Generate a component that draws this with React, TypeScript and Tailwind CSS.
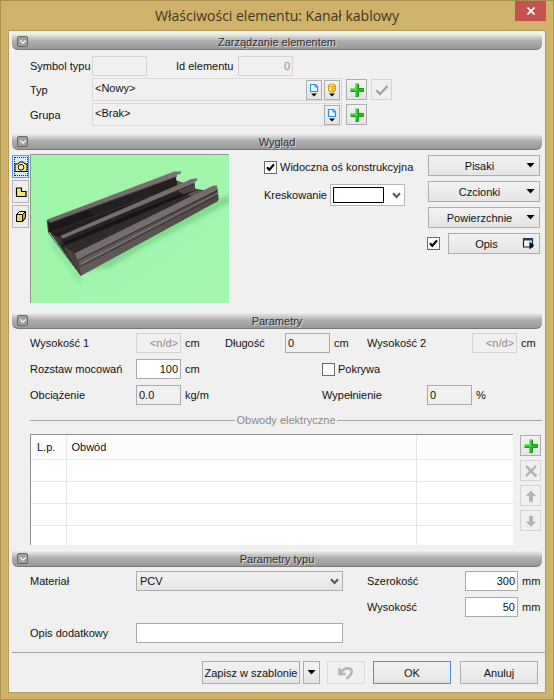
import React, { useState } from 'react';
import clsx from 'clsx';

interface SectionProps {
  title: string;
  children: React.ReactNode;
}

const buttonBase =
  'flex items-center justify-center border border-[#adadad] bg-linear-to-b from-[#f2f2f2] to-[#e5e5e5]';

const Section: React.FC<SectionProps> = ({ title, children }) => (
  <section>
    <h2 className="relative flex h-4 items-center justify-center rounded-t-xs rounded-b-md border-b border-[#777] bg-linear-to-b from-[#ededed] via-[#b0b0b0] via-45% to-[#989898] font-normal text-[#303030] [text-shadow:1px_1px_0_#dcdcdc]">
      <button
        aria-label={`Zwiń: ${title}`}
        className="absolute top-0.5 left-[5px] flex h-[11px] w-[11px] items-center justify-center rounded-xs border border-[#666] bg-[#a0a0a0]"
      >
        <svg viewBox="0 0 10 10" className="h-2 w-2" fill="none" stroke="#fff" strokeWidth="1.5">
          <path d="M1.5 3 5 6.5 8.5 3" />
        </svg>
      </button>
      {title}
    </h2>
    {children}
  </section>
);

interface FieldProps {
  id: string;
  value: string;
  variant?: 'normal' | 'readonly' | 'disabled';
  className?: string;
}

const Field: React.FC<FieldProps> = ({ id, value, variant = 'normal', className }) => (
  <input
    id={id}
    defaultValue={value}
    disabled={variant === 'disabled'}
    readOnly={variant === 'readonly'}
    className={clsx(
      'h-5 shrink-0 border px-0.5 outline-none',
      variant === 'normal' && 'border-[#ababab] bg-white',
      variant === 'readonly' && 'border-[#ababab] bg-[#f0f0f0]',
      variant === 'disabled' && 'border-[#d4d4d4] bg-[#f0f0f0] text-[#8a8a8a]',
      className,
    )}
  />
);

interface CheckProps {
  id: string;
  label: string;
  initial?: boolean;
  hideLabel?: boolean;
}

const Check: React.FC<CheckProps> = ({ id, label, initial = false, hideLabel }) => {
  const [checked, setChecked] = useState(initial);

  return (
    <span className="flex items-center gap-[3px]">
      <span className="relative h-[13px] w-[13px]">
        <input
          id={id}
          type="checkbox"
          checked={checked}
          aria-label={hideLabel ? label : undefined}
          onChange={(e) => setChecked(e.target.checked)}
          className="block h-[13px] w-[13px] appearance-none border border-[#6a6a6a] bg-white"
        />
        {checked && (
          <svg viewBox="0 0 13 13" className="pointer-events-none absolute inset-0" fill="none" stroke="#000" strokeWidth="2.2">
            <path d="M3 6.3 5.3 8.8 10 3.4" />
          </svg>
        )}
      </span>
      {!hideLabel && <label htmlFor={id}>{label}</label>}
    </span>
  );
};

const PlusIcon = () => (
  <svg viewBox="0 0 16 16" className="h-4 w-4">
    <path d="M6.500 1.500h3v5h5v3h-5v5h-3v-5h-5v-3h5z" fill="#22bd18" />
    <path d="M7 9V2h1.500M1.500 7H7" fill="none" stroke="#7fe567" />
    <path d="M9.500 2v4.500h5v3h-5v5h-3M1.500 9.500h5" fill="none" stroke="#128c12" strokeWidth="0.900" />
  </svg>
);

const PageIcon = () => (
  <svg viewBox="0 0 14 18" className="h-[18px] w-3.5">
    <path d="M3.500 3.500v7h7v-5l-2-2z" fill="#f2fbff" stroke="#2893dc" strokeWidth="1.200" />
    <path d="M8 3.500V6h2.500" fill="none" stroke="#2893dc" />
    <path d="M4 12.500h6l-3 3z" fill="#000" />
  </svg>
);

const DatabaseIcon = () => (
  <svg viewBox="0 0 14 18" className="h-[18px] w-3.5">
    <path d="M3.500 4v5.500c0 1 1.500 1.500 3.500 1.500s3.500-.5 3.500-1.500V4z" fill="#f5b916" stroke="#c78909" strokeWidth="0.700" />
    <path d="M5.500 5v5" stroke="#fff09a" strokeWidth="1.500" />
    <ellipse cx="7" cy="4.300" rx="3.500" ry="1.300" fill="#ffe56b" stroke="#c78909" strokeWidth="0.700" />
    <path d="M4 12.500h6l-3 3z" fill="#000" />
  </svg>
);

const Triangle = () => (
  <svg viewBox="0 0 9 5" className="h-[5px] w-[9px] shrink-0">
    <path d="M0.500 0h8L4.500 4.500z" fill="#000" />
  </svg>
);

const ChevronIcon = ({ className }: { className?: string }) => (
  <svg viewBox="0 0 9 7" className={clsx('pointer-events-none h-[7px] w-[9px]', className)} fill="none" stroke="#555" strokeWidth="2">
    <path d="M1 1.300 4.500 5 8 1.300" />
  </svg>
);

const WindowIcon = () => (
  <svg viewBox="0 0 13 13" className="h-[13px] w-[13px] shrink-0">
    <path d="M1.500 1.500h9v8.500h-9z" fill="#f4f8fc" stroke="#10243c" strokeWidth="1.200" />
    <path d="M1 1h10v2.500H1z" fill="#17416e" />
    <path d="M7.500 4.500v8L12 8.500z" fill="#000" />
  </svg>
);

const ChannelRender = () => (
  <svg
    viewBox="90 88 597 446"
    preserveAspectRatio="none"
    className="h-[149px] w-[199px] shrink-0 border-t border-l border-[#8c9a8c]"
    role="img"
    aria-label="Kanał kablowy"
  >
    <defs>
      <linearGradient id="floor" x1="0" y1="0" x2="1" y2="1">
        <stop offset="0" stopColor="#9ff5aa" />
        <stop offset="0.600" stopColor="#a1f5ac" />
        <stop offset="1" stopColor="#a5f7b0" />
      </linearGradient>
      <linearGradient id="lip" x1="0" y1="1" x2="1" y2="0">
        <stop offset="0" stopColor="#6c6566" />
        <stop offset="1" stopColor="#7c7474" />
      </linearGradient>
      <linearGradient id="front" x1="0" y1="1" x2="1" y2="0">
        <stop offset="0" stopColor="#625b5c" />
        <stop offset="0.500" stopColor="#5a5354" />
        <stop offset="1" stopColor="#4c4647" />
      </linearGradient>
      <filter id="soft" x="-20%" y="-20%" width="140%" height="140%">
        <feGaussianBlur stdDeviation="7" />
      </filter>
    </defs>
    <path d="M90 88h597v446H90z" fill="url(#floor)" />
    <g filter="url(#soft)">
      <path d="M241 445 655 222 692 208 690 232 450 355 330 425z" fill="#7fd98c" />
      <path d="M142 320 238 448 242 485 200 425 186 405 158 375z" fill="#8be698" />
    </g>
    {/* floor of the channel */}
    <path d="M143 315 530 165 545 172 583 190 612 194 640 185 241 452z" fill="#242021" />
    <path d="M530 166 550 172 530 182z" fill="#625859" />
    <path d="M148 325 186 365 240 450 226 388 185 340z" fill="#403839" />
    <path d="M186 362 590 194 612 194 228 385z" fill="#302a2b" />
    <path d="M560 206 585 194 612 194 575 212z" fill="#5a5051" />
    {/* back wall */}
    <path d="M139 286 527 150 529 184 143 322z" fill="#1b181a" />
    <path d="M260 250 527 158 529 183 290 282z" fill="#242022" />
    <path d="M147 322 529 182" stroke="#3a3334" strokeWidth="2" />
    <path d="M139 282 522 138 543 138 541 145 531 147 529 154 147 294z" fill="url(#lip)" />
    <path d="M147 293 529 153" stroke="#2b2627" strokeWidth="2" />
    {/* middle wall */}
    <path d="M178 333 582 170 585 195 186 367z" fill="#272324" />
    <path d="M190 350 400 262 550 202 585 195 400 275 190 360z" fill="#171416" />
    <path d="M520 190 555 176 583 172 586 194 550 206z" fill="#4d4446" />
    <path d="M178 332 574 160 591 158 590 166 582 169 580 175 186 341z" fill="#766d6e" />
    <path d="M186 341 580 175" stroke="#1e1a1b" strokeWidth="2" />
    {/* front wall */}
    <path d="M228 392 652 190 656 222 652 228 241 452 228 410z" fill="url(#front)" />
    <path d="M222 384 638 181 651 180 652 194 232 405 222 396z" fill="#756d6d" />
    <path d="M232 405 652 195" stroke="#2d2728" strokeWidth="3" />
    <path d="M240 416 655 202" stroke="#887f7f" strokeWidth="3" />
    <path d="M238 425 655 209" stroke="#3a3334" strokeWidth="3" />
    <path d="M186 365 241 452 234 408 228 404 226 390z" fill="#484041" />
    <path d="M139 284 143 322 241 452" fill="none" stroke="#4e4546" strokeWidth="3" />
  </svg>
);

const CameraIcon = () => (
  <svg viewBox="0 0 14 14" className="h-3.5 w-3.5" fill="#fbe98a" stroke="#000">
    <path d="M1 4h3l1.500-2h4L11 4h2v7.500H1z" />
    <circle cx="7" cy="7.300" r="2.800" fill="#fff" />
    <circle cx="7" cy="7.300" r="1" fill="#bfe0fa" stroke="none" />
  </svg>
);

const ShapeIcon = () => (
  <svg viewBox="0 0 14 14" className="h-3.5 w-3.5">
    <path d="M2.500 3h5v3.500h4.500V11.500H2.500z" fill="#fbe66c" stroke="#000" strokeWidth="1.200" />
  </svg>
);

const CubeIcon = () => (
  <svg viewBox="0 0 14 14" className="h-3.5 w-3.5" stroke="#000">
    <path d="M2.500 4.500 5.500 1.500h6v6l-3 4h-6z" fill="#fff3a5" />
    <path d="M2.500 4.500h6v7h-6z" fill="#f6d84c" />
    <path d="M8.500 4.500l3-3v6l-3 4z" fill="#cfa92c" />
  </svg>
);

const views = [
  { label: 'Podgląd', Icon: CameraIcon },
  { label: 'Widok 2D', Icon: ShapeIcon },
  { label: 'Widok 3D', Icon: CubeIcon },
];

const attributeMenus = ['Pisaki', 'Czcionki', 'Powierzchnie'];

const rowTools = [
  { label: 'Usuń', d: 'M2.500 3.500 4 2.500 8 6.500 12.500 2.500 13.500 3.500 9.500 8 14 12.500 12.500 14 8 9.500 3.500 13.500 2.500 12.500 6.500 8z' },
  { label: 'W górę', d: 'M8 3 12.500 7.500H9.500V13.500H6.500V7.500H3.500z' },
  { label: 'W dół', d: 'M8 13.500 12.500 9H9.500V3H6.500V9H3.500z' },
];

export default function App() {
  const [view, setView] = useState(0);

  return (
    <div className="w-full border border-[#a8914f] bg-[#cfb36a] px-[7px] pb-1.5 font-['Liberation_Sans',Arial,sans-serif] text-[11px] leading-4 whitespace-nowrap text-[#111]">
      <header className="relative flex h-[29px] items-center justify-center">
        <h1 className="font-['Open_Sans',sans-serif] text-[14px] text-[#3d3520]">
          Właściwości elementu: Kanał kablowy
        </h1>
        <button
          aria-label="Zamknij"
          className="absolute top-0 right-0 flex h-5 w-[31px] items-center justify-center bg-[#c75050]"
        >
          <svg viewBox="0 0 8 8" className="h-2 w-2" stroke="#fff" strokeWidth="1.700">
            <path d="M0.500 0.500 7.500 7.500M7.500 0.500 0.500 7.500" />
          </svg>
        </button>
      </header>

      <main className="border border-[#b39b58] bg-[#f0f0f0] pt-[3px]">
        <div className="flex flex-col px-[3px]">
          <Section title="Zarządzanie elementem">
            <div className="flex flex-col gap-0.5 pt-1.5 pb-2 pl-[18px]">
              <div className="flex items-center">
                <label htmlFor="symbol" className="w-[62px] shrink-0">Symbol typu</label>
                <Field id="symbol" value="" variant="disabled" className="w-[55px]" />
                <label htmlFor="element-id" className="ml-[29px] w-[62px] shrink-0">Id elementu</label>
                <Field id="element-id" value="0" variant="disabled" className="w-[55px] text-right" />
              </div>
              <div className="flex items-center gap-1">
                <label htmlFor="type" className="w-[58px] shrink-0">Typ</label>
                <div className="flex h-[23px] w-[250px] items-center gap-0.5 border border-[#d9d9d9] pr-px">
                  <input id="type" readOnly value="<Nowy>" className="min-w-0 flex-1 px-0.5 pb-1 outline-none" />
                  <button aria-label="Wczytaj typ" className={clsx(buttonBase, 'h-5 w-4')}><PageIcon /></button>
                  <button aria-label="Baza typów" className={clsx(buttonBase, 'h-5 w-4')}><DatabaseIcon /></button>
                </div>
                <button aria-label="Dodaj typ" className={clsx(buttonBase, 'h-[21px] w-[21px]')}><PlusIcon /></button>
                <button aria-label="Zatwierdź typ" disabled className="flex h-[21px] w-[21px] items-center justify-center border border-[#d4d4d4]">
                  <svg viewBox="0 0 14 14" className="h-3.5 w-3.5" fill="none" stroke="#a6a6a6" strokeWidth="2.500">
                    <path d="M1.500 7.500 5 11 12.500 3" />
                  </svg>
                </button>
              </div>
              <div className="flex items-center gap-1">
                <label htmlFor="group" className="w-[58px] shrink-0">Grupa</label>
                <div className="flex h-[23px] w-[250px] items-center border border-[#d9d9d9] pr-px">
                  <input id="group" readOnly value="<Brak>" className="min-w-0 flex-1 px-0.5 pb-1 outline-none" />
                  <button aria-label="Wybierz grupę" className={clsx(buttonBase, 'h-5 w-4')}><PageIcon /></button>
                </div>
                <button aria-label="Dodaj grupę" className={clsx(buttonBase, 'h-[21px] w-[21px]')}><PlusIcon /></button>
              </div>
            </div>
          </Section>

          <Section title="Wygląd">
            <div className="flex pt-1 pr-0.5 pb-2.5">
              <div className="flex shrink-0 flex-col gap-0.5 pt-px pr-px">
                {views.map(({ label, Icon }, i) => (
                  <button
                    key={label}
                    aria-label={label}
                    onClick={() => setView(i)}
                    className={clsx(
                      'flex h-[23px] w-[17px] items-center justify-center border',
                      view === i ? 'border-[#569de5] bg-[#d9ebfb]' : 'border-[#b5b5b5] bg-[#ededed]',
                    )}
                  >
                    <span className={clsx('flex h-[19px] w-3.5 items-center justify-center', view === i && 'outline-1 -outline-offset-1 outline-dotted outline-[#222]')}>
                      <Icon />
                    </span>
                  </button>
                ))}
              </div>
              <ChannelRender />
              <div className="ml-[35px] flex flex-col gap-[9px] pt-[5px]">
                <Check id="axis" label="Widoczna oś konstrukcyjna" initial />
                <div className="flex items-center">
                  <label htmlFor="hatch" className="w-[66px] shrink-0">Kreskowanie</label>
                  <div className="relative">
                    <select id="hatch" className="block h-[22px] w-[75px] appearance-none border border-[#b5b5b5] bg-white text-transparent">
                      <option>Brak</option>
                    </select>
                    <span className="pointer-events-none absolute inset-y-[3px] left-[3px] w-[51px] border border-black bg-white" />
                    <ChevronIcon className="absolute top-2 right-1" />
                  </div>
                </div>
              </div>
              <div className="ml-auto flex w-[113px] flex-col gap-[5px] pt-px">
                {attributeMenus.map((name) => (
                  <button key={name} className={clsx(buttonBase, 'ml-px h-[21px] pr-1')}>
                    <span className="flex-1 pl-1">{name}</span>
                    <Triangle />
                  </button>
                ))}
                <div className="flex items-center gap-2">
                  <Check id="desc" label="Pokaż opis" initial hideLabel />
                  <button className={clsx(buttonBase, 'h-[21px] flex-1 pr-1')}>
                    <span className="flex-1 pl-0.5">Opis</span>
                    <WindowIcon />
                  </button>
                </div>
              </div>
            </div>
          </Section>

          <Section title="Parametry">
            <div className="flex flex-col gap-1.5 pt-1 pl-[18px]">
              <div className="flex items-center">
                <label htmlFor="height1" className="w-[106px] shrink-0">Wysokość 1</label>
                <Field id="height1" value="<n/d>" variant="disabled" className="w-[45px] text-right" />
                <span className="w-11 shrink-0 pl-1">cm</span>
                <label htmlFor="length" className="w-[60px] shrink-0">Długość</label>
                <Field id="length" value="0" variant="readonly" className="w-[45px]" />
                <span className="w-[37px] shrink-0 pl-1">cm</span>
                <label htmlFor="height2" className="w-[105px] shrink-0">Wysokość 2</label>
                <Field id="height2" value="<n/d>" variant="disabled" className="w-[45px] text-right" />
                <span className="pl-1">cm</span>
              </div>
              <div className="flex items-center">
                <label htmlFor="spacing" className="w-[106px] shrink-0">Rozstaw mocowań</label>
                <Field id="spacing" value="100" className="w-[45px] text-right" />
                <span className="w-[141px] shrink-0 pl-1">cm</span>
                <Check id="cover" label="Pokrywa" />
              </div>
              <div className="flex items-center">
                <label htmlFor="load" className="w-[106px] shrink-0">Obciążenie</label>
                <Field id="load" value="0.0" variant="readonly" className="w-[45px]" />
                <span className="w-[141px] shrink-0 pl-1">kg/m</span>
                <label htmlFor="fill" className="w-[105px] shrink-0">Wypełnienie</label>
                <Field id="fill" value="0" variant="readonly" className="w-[45px]" />
                <span className="pl-1">%</span>
              </div>
            </div>

            <div className="mt-[7px] ml-[18px] flex items-center gap-px text-[#8a8a8a]">
              <span className="h-px flex-1 bg-[#a0a0a0]" />
              <h3>Obwody elektryczne</h3>
              <span className="h-px flex-1 bg-[#a0a0a0]" />
            </div>

            <div className="mt-1.5 mr-px mb-1.5 ml-[18px] flex gap-[7px]">
              <div className="flex-1 border-t border-l border-[#909090] bg-white">
                <table className="w-full table-fixed border-collapse text-left">
                  <thead>
                    <tr className="h-6 border-b border-[#ececec] bg-[#fcfcfc]">
                      <th className="w-[35px] border-r border-[#e6e6ea] pl-1.5 font-normal">L.p.</th>
                      <th className="border-r border-[#e6e6ea] pl-[5px] font-normal">Obwód</th>
                      <th className="w-[97px]" />
                    </tr>
                  </thead>
                  <tbody>
                    {[0, 1, 2, 3].map((row) => (
                      <tr key={row} className="h-[22px] border-b border-[#e8e8ec] last:h-5 last:border-b-0">
                        <td className="border-r border-[#e6e6ea]" />
                        <td className="border-r border-[#e6e6ea]" />
                        <td />
                      </tr>
                    ))}
                  </tbody>
                </table>
              </div>
              <div className="flex flex-col gap-1 pt-px">
                <button aria-label="Dodaj obwód" className={clsx(buttonBase, 'h-[21px] w-[21px]')}><PlusIcon /></button>
                {rowTools.map(({ label, d }) => (
                  <button key={label} aria-label={label} disabled className="flex h-[21px] w-[21px] items-center justify-center border border-[#d4d4d4]">
                    <svg viewBox="0 0 16 16" className="h-4 w-4" fill="#b4b4b4" stroke="#a0a0a0" strokeWidth="0.500">
                      <path d={d} />
                    </svg>
                  </button>
                ))}
              </div>
            </div>
          </Section>

          <Section title="Parametry typu">
            <div className="flex flex-col gap-1.5 pt-1 pb-[9px] pl-[18px]">
              <div className="flex items-center">
                <label htmlFor="material" className="w-[106px] shrink-0">Materiał</label>
                <div className="relative">
                  <select id="material" className="block h-5 w-[207px] appearance-none border border-[#adadad] bg-linear-to-b from-[#f2f2f2] to-[#e5e5e5] pl-[3px]">
                    <option>PCV</option>
                  </select>
                  <ChevronIcon className="absolute top-[7px] right-1" />
                </div>
                <label htmlFor="width" className="ml-6 w-[98px] shrink-0">Szerokość</label>
                <Field id="width" value="300" className="w-[53px] text-right" />
                <span className="pl-1">mm</span>
              </div>
              <div className="flex items-center pl-[337px]">
                <label htmlFor="type-height" className="w-[98px] shrink-0">Wysokość</label>
                <Field id="type-height" value="50" className="w-[53px] text-right" />
                <span className="pl-1">mm</span>
              </div>
              <div className="flex items-center">
                <label htmlFor="extra" className="w-[106px] shrink-0">Opis dodatkowy</label>
                <Field id="extra" value="" className="w-[207px]" />
              </div>
            </div>
          </Section>
        </div>

        <footer className="ml-[3px] flex justify-end border-t border-[#a0a0a0] pt-2 pr-[7px] pb-2">
          <button className={clsx(buttonBase, 'h-[23px] w-[98px]')}>Zapisz w szablonie</button>
          <button aria-label="Opcje zapisu" className={clsx(buttonBase, 'ml-[3px] h-[23px] w-[17px]')}><Triangle /></button>
          <button aria-label="Cofnij" disabled className="ml-[7px] flex h-[23px] w-[38px] items-center justify-center border border-[#d9d9d9]">
            <svg viewBox="0 0 18 16" className="h-4 w-[18px]" fill="none" stroke="#b4b4b4" strokeWidth="2.500">
              <path d="M2.500 3v6h6M3 8.500C6 4 9.500 2.500 12.500 3.500 16.500 5 15 10 9.500 13.500" />
            </svg>
          </button>
          <button className="ml-2 flex h-[23px] w-[78px] items-center justify-center border border-[#4a90e2] bg-linear-to-b from-[#f2f2f2] to-[#e5e5e5]">OK</button>
          <button className={clsx(buttonBase, 'ml-[9px] h-[23px] w-[78px]')}>Anuluj</button>
        </footer>
      </main>
    </div>
  );
}
